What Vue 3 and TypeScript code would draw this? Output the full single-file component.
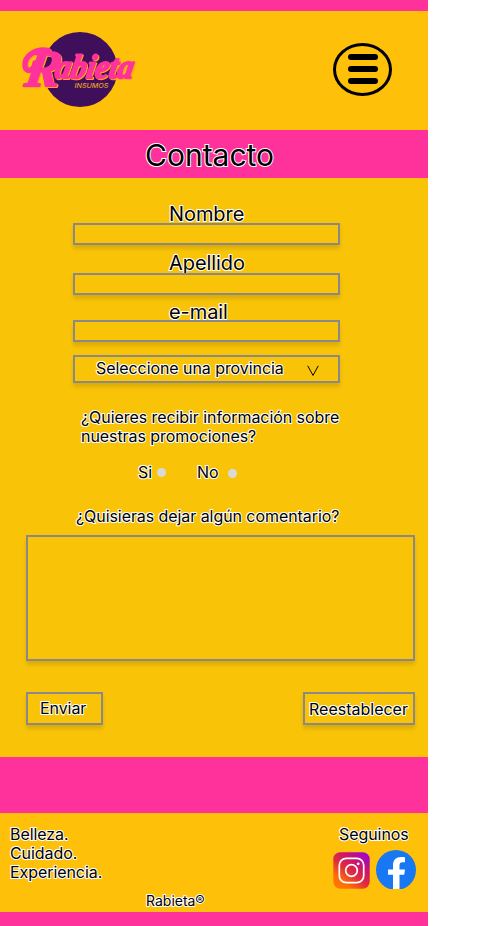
<script setup lang="ts">
import { ref } from 'vue'

interface Field {
  id: string
  label: string
}

const fields: Field[] = [
  { id: 'nombre', label: 'Nombre' },
  { id: 'apellido', label: 'Apellido' },
  { id: 'email', label: 'e-mail' },
]
const values = ref<Record<string, string>>({ nombre: '', apellido: '', email: '' })
const comment = ref('')
const promos = ref<'si' | 'no' | null>(null)
const slogan: string[] = ['Belleza.', 'Cuidado.', 'Experiencia.']

function reset(): void {
  values.value = { nombre: '', apellido: '', email: '' }
  comment.value = ''
  promos.value = null
}
</script>

<template>
  <div class="page">
    <header class="header">
      <svg class="logo" viewBox="0 0 120 80" width="120" height="80" aria-label="Rabieta Insumos">
        <circle cx="60" cy="39.500" r="37.500" fill="#3f0f5c" />
        <g class="script">
          <path class="swash" d="M28 20.500C16 18 4 26 5 36C6 43 14 41 15 33" />
          <g transform="translate(0 48) skewX(-10)">
            <text><tspan class="initial" x="5" y="8">R</tspan><tspan x="34" y="0" textLength="78" lengthAdjust="spacingAndGlyphs">abieta</tspan></text>
          </g>
        </g>
        <text class="sub" x="54.500" y="57.500" textLength="34" lengthAdjust="spacingAndGlyphs">INSUMOS</text>
      </svg>
      <button class="menu" type="button" aria-label="Menú">
        <span class="bar"></span>
        <span class="bar"></span>
        <span class="bar"></span>
      </button>
    </header>

    <h1 class="title">Contacto</h1>

    <form class="form" @submit.prevent @reset.prevent="reset">
      <div v-for="f in fields" :key="f.id" class="field" :class="f.id">
        <label :for="f.id">{{ f.label }}</label>
        <input :id="f.id" v-model="values[f.id]" class="box" type="text" />
      </div>

      <div class="box select">
        <span>Seleccione una provincia</span>
        <svg width="12" height="12" viewBox="0 0 12 12">
          <path d="M.7.8L6 10.400L11.300.8" fill="none" stroke="#000" stroke-width="1" />
        </svg>
      </div>

      <p class="question">¿Quieres recibir información sobre nuestras promociones?</p>
      <div class="options">
        <label class="option si">Si<input v-model="promos" type="radio" value="si" /></label>
        <label class="option no">No<input v-model="promos" type="radio" value="no" /></label>
      </div>

      <label class="comment-label" for="comment">¿Quisieras dejar algún comentario?</label>
      <textarea id="comment" v-model="comment" class="box comment"></textarea>

      <div class="actions">
        <button class="box send" type="submit">Enviar</button>
        <button class="box clear" type="reset">Reestablecer</button>
      </div>
    </form>

    <footer class="footer">
      <div class="footer-main">
        <div class="slogan">
          <div v-for="line in slogan" :key="line">{{ line }}</div>
        </div>
        <div class="social">
          <span>Seguinos</span>
          <div class="icons">
            <svg class="instagram" width="37" height="37" viewBox="0 0 37 37">
              <defs>
                <linearGradient id="ig" x1="0.1" y1="1" x2="0.9" y2="0">
                  <stop offset="0" stop-color="#ff7a00" />
                  <stop offset="0.2" stop-color="#ff6d08" />
                  <stop offset="0.45" stop-color="#e12d3d" />
                  <stop offset="0.68" stop-color="#cc1768" />
                  <stop offset="1" stop-color="#9a00d8" />
                </linearGradient>
              </defs>
              <rect x="0.300" y="0.300" width="36.400" height="36.400" rx="7" fill="url(#ig)" />
              <rect x="6.300" y="6.300" width="24.400" height="24.400" rx="7" fill="none" stroke="#fff" stroke-width="1.700" />
              <circle cx="18.500" cy="18.500" r="5.800" fill="none" stroke="#fff" stroke-width="1.700" />
              <circle cx="25.200" cy="11.800" r="1.400" fill="#fff" />
            </svg>
            <svg width="40" height="39" viewBox="0 0 40 39">
              <circle cx="20" cy="20" r="20" fill="#1877f2" />
              <path d="M17 39V24.800H12V19.500H17V15.200C17 9.800 20.200 7 25 7C26.600 7 28 7.100 29 7.300V12.300H26.500C24 12.300 23.500 13.600 23.500 15.500V19.500H29L28.200 24.800H23.500V39Z" fill="#fff" />
            </svg>
          </div>
        </div>
      </div>
      <div class="brand">Rabieta®</div>
    </footer>
  </div>
</template>

<style>
body {
  margin: 0;
  background: #fff;
}
</style>

<style scoped>
.page {
  box-sizing: border-box;
  width: 428px;
  height: 926px;
  border-top: 11px solid #ff329b;
  border-bottom: 14px solid #ff329b;
  background: #ff329b;
  font-family: Inter, sans-serif;
  font-size: 16px;
  line-height: 19px;
  letter-spacing: -0.07px;
  color: #000;
  -webkit-text-stroke: 2px #fff;
  paint-order: stroke fill;
}

.page * {
  box-sizing: border-box;
}

.header {
  display: flex;
  justify-content: space-between;
  align-items: flex-start;
  height: 119px;
  padding: 19px 36px 0 20px;
  background: #ffc00a;
}

.logo {
  overflow: visible;
  letter-spacing: 0;
  -webkit-text-stroke: 0;
}

.script {
  font-family: "Liberation Serif", serif;
  font-size: 34px;
  font-style: italic;
  font-weight: 700;
  fill: #ff329b;
  stroke: #ff329b;
  stroke-width: 2px;
  stroke-linejoin: round;
  filter: drop-shadow(1px 1px 0 #ffa516);
}

.initial {
  font-size: 52px;
}

.swash {
  fill: none;
  stroke-width: 5.5px;
  stroke-linecap: round;
}

.sub {
  font-size: 6.5px;
  font-style: italic;
  font-weight: 500;
  fill: #e9a01c;
}

.menu {
  display: flex;
  flex-direction: column;
  align-items: center;
  gap: 6px;
  width: 59px;
  height: 53px;
  margin-top: 13px;
  padding: 8px 0 0;
  border: 3px solid #000;
  border-radius: 50%;
  background: none;
}

.bar {
  width: 30px;
  height: 6px;
  border-radius: 3px;
  background: #000;
}

.title {
  height: 48px;
  margin: 0;
  padding: 7px 0 0 145px;
  font-size: 30px;
  font-weight: 400;
  line-height: 37px;
  letter-spacing: 0;
}

.form {
  height: 579px;
  padding-top: 24px;
  background: #f9c408;
}

.box {
  display: block;
  border: 2px solid #8b8888;
  border-radius: 0;
  background: #f9c408;
  box-shadow: 0 4px 4px rgba(0, 0, 0, 0.12);
  font: inherit;
  letter-spacing: inherit;
  color: inherit;
  outline: none;
}

.field {
  display: flex;
  flex-direction: column;
  width: 267px;
  height: 49px;
  margin-left: 73px;
}

.field label {
  height: 21px;
  padding-left: 96px;
  font-size: 20px;
  line-height: 24px;
}

.field .box {
  width: 100%;
  height: 22px;
}

.apellido label {
  height: 22px;
}

.email label {
  height: 20px;
}

.email {
  height: 55px;
}

.select {
  display: flex;
  justify-content: space-between;
  width: 267px;
  height: 28px;
  margin-left: 73px;
  padding: 2px 19px 0 21px;
}

.select svg {
  margin-top: 6px;
}

.question {
  width: 280px;
  margin: 25px 0 0 81px;
}

.options {
  display: flex;
  gap: 31px;
  margin: 17px 0 0 138px;
}

.option {
  display: flex;
}

.option input {
  appearance: none;
  width: 9px;
  height: 9px;
  margin: 5px 0 0 5px;
  border-radius: 50%;
  background: #d9d9d9;
}

.option.no input {
  margin: 6px 0 0 9px;
}

.option input:checked {
  background: #3f0f5c;
}

.comment-label {
  display: block;
  margin: 25px 0 0 76px;
}

.comment {
  width: 389px;
  height: 126px;
  margin: 9px 0 0 26px;
  resize: none;
}

.actions {
  display: flex;
  justify-content: space-between;
  padding: 31px 13px 0 26px;
}

.actions .box {
  height: 33px;
  padding: 0;
  line-height: 19px;
  paint-order: inherit;
  -webkit-text-stroke: inherit;
  text-align: left;
}

.actions .send {
  width: 77px;
  padding: 0 0 1px 12px;
}

.actions .clear {
  width: 112px;
  padding: 1px 0 0 4px;
  letter-spacing: 0;
}

.footer {
  height: 99px;
  margin-top: 56px;
  padding: 12px 12px 0 10px;
  background: #ffc00a;
}

.footer-main {
  display: flex;
  justify-content: space-between;
  height: 67px;
}

.social > span {
  display: block;
  margin-left: 6px;
}

.icons {
  display: flex;
  gap: 6px;
  margin-top: 6px;
}

.instagram {
  margin-top: 2px;
}

.brand {
  margin-left: 136px;
  font-size: 14px;
  line-height: 17px;
  letter-spacing: 0;
}
</style>
